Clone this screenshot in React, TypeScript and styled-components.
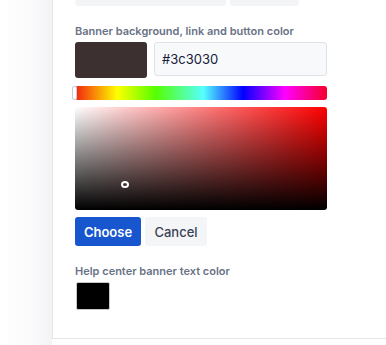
import styled, { createGlobalStyle } from 'styled-components';

const GlobalStyle = createGlobalStyle`
  html, body {
    margin: 0;
    padding: 0;
    background: #fff;
  }
  body {
    font-family: Inter, "Noto Sans", sans-serif;
    -webkit-font-smoothing: antialiased;
  }
`;

const Page = styled.div`
  display: flex;
  width: 386px;
  height: 345px;
  overflow: hidden;
`;

const Gutter = styled.div`
  width: 52px;
  flex-shrink: 0;
  background: linear-gradient(to right, #ffffff 0%, #fbfbfc 60%, #f2f3f5 100%);
`;

const Panel = styled.div`
  flex: 1;
  height: 339px;
  border-left: 1px solid #e3e5e9;
  border-bottom: 1px solid #e3e5e9;
  padding-left: 22px;
  box-sizing: border-box;
`;

const Content = styled.div`
  width: 252px;
  display: flex;
  flex-direction: column;
`;

const TopRow = styled.div`
  display: flex;
  gap: 4px;
  height: 6px;
`;

const TopField = styled.div<{ $w: number }>`
  width: ${(p) => p.$w}px;
  height: 6px;
  background: #f3f4f6;
  border-radius: 0 0 4px 4px;
`;

const Label = styled.div<{ $top: number }>`
  margin-top: ${(p) => p.$top}px;
  font-size: 11px;
  line-height: 14px;
  font-weight: 600;
  color: #697386;
  white-space: nowrap;
`;

const PickerRow = styled.div`
  display: flex;
  gap: 7px;
  margin-top: 4px;
  align-items: flex-start;
`;

const Swatch = styled.div<{ $color: string; $w: number; $h: number }>`
  width: ${(p) => p.$w}px;
  height: ${(p) => p.$h}px;
  background: ${(p) => p.$color};
  border-radius: 3px;
  box-sizing: border-box;
  flex-shrink: 0;
`;

const HexInput = styled.div`
  flex: 1;
  height: 34px;
  box-sizing: border-box;
  border: 1px solid #dfe2e7;
  border-radius: 3px;
  background: #f8f9fb;
  display: flex;
  align-items: center;
  padding-left: 7px;
  font-size: 13px;
  color: #16203a;
`;

const HueBar = styled.div`
  position: relative;
  margin-top: 8px;
  height: 14px;
  border-radius: 3px;
  background: linear-gradient(
    to right,
    #f2210f 0%,
    #ffff00 16.7%,
    #55ff00 32%,
    #55ffff 51%,
    #0000ff 66.7%,
    #ff00ff 83.3%,
    #f5002a 100%
  );
`;

const HueHandle = styled.div`
  position: absolute;
  left: -3px;
  top: 0;
  width: 5px;
  height: 14px;
  box-sizing: border-box;
  background: #fff;
  border: 1px solid #c9ccd2;
  border-radius: 2px;
`;

const SatArea = styled.div`
  position: relative;
  margin-top: 7px;
  height: 103px;
  border-radius: 3px;
  background: linear-gradient(to top, #000, rgba(0, 0, 0, 0)),
    linear-gradient(to right, #fff, #f00);
`;

const SatCursor = styled.div`
  position: absolute;
  left: 46px;
  top: 74px;
  width: 8px;
  height: 7px;
  box-sizing: border-box;
  border: 2px solid #fff;
  border-radius: 50%;
`;

const ButtonRow = styled.div`
  display: flex;
  gap: 4px;
  margin-top: 7px;
`;

const Button = styled.div<{ $primary?: boolean; $w: number }>`
  width: ${(p) => p.$w}px;
  height: 29px;
  border-radius: 3px;
  display: flex;
  align-items: center;
  justify-content: center;
  font-size: 13px;
  font-weight: ${(p) => (p.$primary ? 600 : 500)};
  background: ${(p) => (p.$primary ? '#1756cf' : '#f4f5f7')};
  color: ${(p) => (p.$primary ? '#ffffff' : '#3a4256')};
`;

const SmallSwatch = styled(Swatch)`
  margin-top: 4px;
  margin-left: 1px;
  border: 1px solid #c4c7cc;
  border-radius: 2px;
`;

export default function App() {
  return (
    <>
      <GlobalStyle />
      <Page>
        <Gutter />
        <Panel>
          <Content>
            <TopRow>
              <TopField $w={151} />
              <TopField $w={69} />
            </TopRow>
            <Label $top={18}>Banner background, link and button color</Label>
            <PickerRow>
              <Swatch $color="#3c3030" $w={72} $h={36} />
              <HexInput>#3c3030</HexInput>
            </PickerRow>
            <HueBar>
              <HueHandle />
            </HueBar>
            <SatArea>
              <SatCursor />
            </SatArea>
            <ButtonRow>
              <Button $primary $w={66}>Choose</Button>
              <Button $w={62}>Cancel</Button>
            </ButtonRow>
            <Label $top={18}>Help center banner text color</Label>
            <SmallSwatch $color="#000" $w={34} $h={28} />
          </Content>
        </Panel>
      </Page>
    </>
  );
}
